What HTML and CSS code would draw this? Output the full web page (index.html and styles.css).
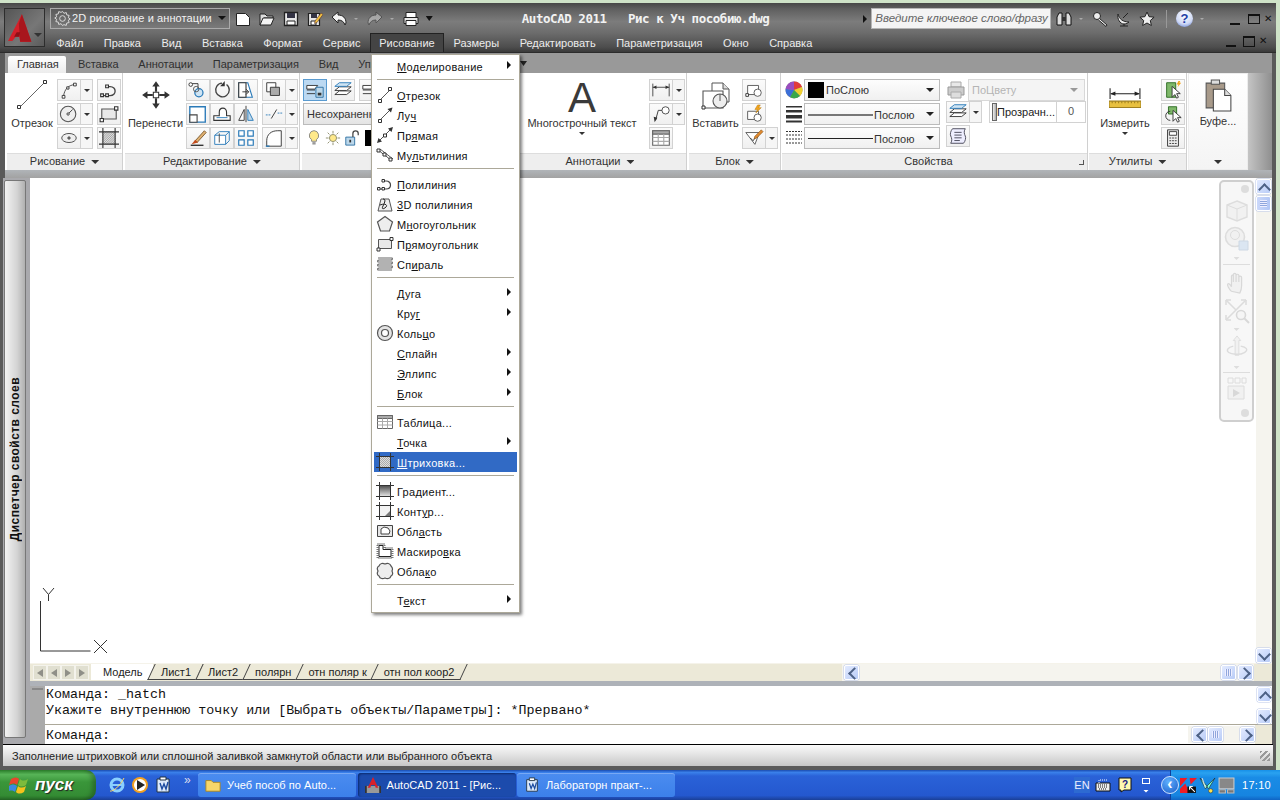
FILE: index.html
```html
<!DOCTYPE html>
<html lang="ru">
<head>
<meta charset="utf-8">
<title>AutoCAD 2011</title>
<link rel="stylesheet" href="styles.css">
</head>
<body>
<svg class="defs" width="0" height="0">
  <defs>
    <symbol id="i-bigline" viewBox="0 0 32 32"><path d="M3.500 28.500L29 3" fill="none" stroke="#666"/><path d="M1.500 26.500h3v3h-3zM27.500 1.500h3v3h-3z" fill="#fff" stroke="#333"/></symbol>
    <symbol id="i-line" viewBox="0 0 18 18"><path d="M4 14L14 4" fill="none" stroke="#555"/><path d="M2.500 13.500h3v3h-3zM12.500 1.500h3v3h-3z" fill="#fff" stroke="#333"/></symbol>
    <symbol id="i-ray" viewBox="0 0 18 18"><path d="M4 14L15 3" fill="none" stroke="#555"/><path d="M2.500 13.500h3v3h-3z" fill="#fff" stroke="#333"/><path d="M16.500 1.500l-5 1.500 3.500 3.500z" fill="#333"/></symbol>
    <symbol id="i-xline" viewBox="0 0 18 18"><path d="M2 16L16 2" fill="none" stroke="#555"/><path d="M7.500 8h3v3h-3z" fill="#fff" stroke="#333"/><path d="M17 1l-5 1.500 3.500 3.500zM1 17l5-1.500L2.500 12z" fill="#333"/></symbol>
    <symbol id="i-mline" viewBox="0 0 18 18"><path d="M2 4l13 10M4 3l13 10" fill="none" stroke="#555"/><path d="M1 3h3v3H1zM7 7h3v3H7zM13 12h3v3h-3z" fill="#fff" stroke="#333"/></symbol>
    <symbol id="i-pline" viewBox="0 0 18 18"><path d="M4 14h6c6 0 6-8 0-8H8" fill="none" stroke="#444" stroke-width="1.200"/><path d="M1.500 12.500h2.500v2.500H1.500zM6 12.500h2.500v2.500H6zM6 4.500h2.500v2.500H6z" fill="#fff" stroke="#333"/></symbol>
    <symbol id="i-3dp" viewBox="0 0 18 18"><path d="M5 4h8l3 12H2z" fill="#eee" stroke="#555"/><path d="M4 10c5-2 8 0 6 2s-5 3-3-1 3-7 0-7" fill="none" stroke="#222"/></symbol>
    <symbol id="i-pent" viewBox="0 0 18 18"><path d="M9 1.500l7.500 5.500-3 9h-9l-3-9z" fill="#eee" stroke="#555" stroke-width="1.200"/></symbol>
    <symbol id="i-rect" viewBox="0 0 18 18"><path d="M2.500 4.500h13v9h-13z" fill="#e8e8e8" stroke="#555"/><path d="M1 13h3v3H1zM14 2.500h3v3h-3z" fill="#fff" stroke="#333"/></symbol>
    <symbol id="i-spiral" viewBox="0 0 18 18"><path d="M2 3h14c1 1 0 2-1 2H3c-1 0-2 1-1 2h14c1 1 0 2-1 2H3c-1 0-2 1-1 2h14c1 1 0 2-1 2H3c-1 0-2 1-1 2h14" fill="none" stroke="#666" stroke-width="1.100"/></symbol>
    <symbol id="i-donut" viewBox="0 0 18 18"><circle cx="9" cy="9" r="7.500" fill="#e4e4e4" stroke="#555" stroke-width="1.200"/><circle cx="9" cy="9" r="3.500" fill="#fff" stroke="#555" stroke-width="1.200"/></symbol>
    <symbol id="i-table" viewBox="0 0 18 18"><path d="M1.500 2.500h15v13h-15z" fill="#fff" stroke="#666"/><path d="M1.500 2.500h15v3h-15z" fill="#aaa" stroke="#666"/><path d="M6.500 5.500v10M11.500 5.500v10M1.500 8.500h15M1.500 12h15" fill="none" stroke="#aaa"/></symbol>
    <symbol id="i-hatch" viewBox="0 0 18 18"><path d="M3 3h12v12H3z" fill="#ddd"/><path d="M3 5l2-2M3 7l4-4M3 9l6-6M3 11l8-8M3 13L13 3M3 15L15 3M5 15L15 5M7 15l8-8M9 15l6-6M11 15l4-4M13 15l2-2" stroke="#888" stroke-width=".6" fill="none"/><path d="M0 3.500h18M0 14.500h18M3.500 0v18M14.500 0v18" stroke="#333" fill="none"/></symbol>
    <symbol id="i-grad" viewBox="0 0 18 18"><defs><linearGradient id="g1" x1="0" y1="0" x2="0" y2="1"><stop offset="0" stop-color="#444"/><stop offset="1" stop-color="#eee"/></linearGradient></defs><path d="M3 3h12v12H3z" fill="url(#g1)"/><path d="M0 3.500h18M0 14.500h18M3.500 0v18M14.500 0v18" stroke="#333" fill="none"/></symbol>
    <symbol id="i-bound" viewBox="0 0 18 18"><path d="M4 4h10v10H4z" fill="#f2f2f2"/><path d="M9 14l5-5v5z" fill="#777"/><path d="M0 3.500h18M0 14.500h18M3.500 0v18M14.500 0v18" stroke="#333" fill="none"/></symbol>
    <symbol id="i-region" viewBox="0 0 18 18"><path d="M1.500 3.500h15v11h-15z" fill="#e6e6e6" stroke="#444"/><path d="M5 12V7l3-2 4 1 2 3-1 3z" fill="#fff" stroke="#444"/></symbol>
    <symbol id="i-wipe" viewBox="0 0 18 18"><path d="M1.500 2h7v4h8v10h-15z" fill="#fff" stroke="#777" stroke-width="2" stroke-dasharray="1 1"/><path d="M3 3.500h4v4h8v7H3z" fill="#fff" stroke="#222"/></symbol>
    <symbol id="i-cloud" viewBox="0 0 18 18"><path d="M3 4c1-3 4-3 6-2 2-1 5-1 6 2 2 2 2 3 1 5 1 2 1 4-1 5-1 3-4 3-6 2-2 1-5 1-6-2-2-1-2-3-1-5-1-2-1-4 1-5z" fill="#eee" stroke="#555" stroke-width="1.200"/></symbol>
    <symbol id="i-arc" viewBox="0 0 24 22"><path d="M6 18C7 10 11 6 18 5" fill="none" stroke="#444"/><path d="M4.500 17h3v3h-3zM9.500 7.500h2.500v2.500H9.500zM17 3.500h3v3h-3z" fill="#fff" stroke="#333"/></symbol>
    <symbol id="i-circle" viewBox="0 0 24 22"><circle cx="11" cy="11" r="8.500" fill="#eee" stroke="#555" stroke-width="1.200"/><path d="M11 11l5-5" stroke="#333"/><circle cx="11" cy="11" r="1.300" fill="#fff" stroke="#333"/></symbol>
    <symbol id="i-ellipse" viewBox="0 0 24 22"><ellipse cx="12" cy="11" rx="8" ry="5" fill="#eee" stroke="#444"/><path d="M10 11h4M12 9v4" stroke="#222"/></symbol>
    <symbol id="i-move" viewBox="0 0 30 30"><path d="M15 2l3.500 5h-2.500v5h-2V7h-2.500zM15 28l-3.500-5h2.500v-5h2v5h2.500zM2 15l5-3.500V14h5v2H7v2.500zM28 15l-5 3.500V16h-5v-2h5v-2.500z" fill="#333"/><path d="M12.500 12.500h5v5h-5z" fill="#fff" stroke="#333"/></symbol>
    <symbol id="i-copy" viewBox="0 0 24 22"><path d="M3 4h9v6" fill="none" stroke="#333"/><circle cx="4" cy="5" r="2" fill="#fff" stroke="#333"/><circle cx="13" cy="14" r="4.500" fill="#cfe4f3" stroke="#2a7ab8" stroke-width="1.400"/><circle cx="10" cy="10" r="3" fill="none" stroke="#555"/></symbol>
    <symbol id="i-rot" viewBox="0 0 24 22"><path d="M17 5a7.500 7.500 0 1 1-5-1.500" fill="none" stroke="#444" stroke-width="1.500"/><path d="M15 1v6h-5z" fill="#333"/></symbol>
    <symbol id="i-trim" viewBox="0 0 24 22"><path d="M4 3h10l5 16H4z" fill="#fff" stroke="#2a7ab8" stroke-width="1.200"/><path d="M4 3h8v16H4z" fill="#fff" stroke="#333" stroke-width="1.200"/><path d="M8 13h7M12 10l3 3-3 3" fill="none" stroke="#333"/></symbol>
    <symbol id="i-scale" viewBox="0 0 24 22"><path d="M3 3h17v17H3z" fill="#fff" stroke="#2a7ab8" stroke-width="1.500"/><path d="M3 12h8v8H3z" fill="#fff" stroke="#444" stroke-width="1.200"/></symbol>
    <symbol id="i-stretch" viewBox="0 0 24 22"><path d="M3 18h18v-5h-4V9c0-6-8-6-8 0v4H3z" fill="#fff" stroke="#333" stroke-width="1.200"/><path d="M6 15h12" stroke="#2a7ab8"/></symbol>
    <symbol id="i-mirror" viewBox="0 0 24 22"><path d="M12 2v18" stroke="#333" fill="none"/><path d="M10 6v12H4z" fill="#fff" stroke="#333"/><path d="M14 6v12h6z" fill="#bcd7ea" stroke="#2a7ab8"/></symbol>
    <symbol id="i-brush" viewBox="0 0 24 22"><path d="M9 14L19 3l2 2-10 11z" fill="#e0b070" stroke="#7a5a30"/><path d="M5 18l4-5 3 3z" fill="#c24a1a"/><path d="M4 19h14" stroke="#222" stroke-width="1.400"/></symbol>
    <symbol id="i-3d" viewBox="0 0 24 22"><path d="M4 8h12v10H4z" fill="#fff" stroke="#2a7ab8"/><path d="M4 8l5-4h11l-4 4M16 18l4-4V4" fill="none" stroke="#2a7ab8"/><path d="M9 6v10" stroke="#444"/></symbol>
    <symbol id="i-array" viewBox="0 0 24 22"><path d="M4 3h6v6H4zM14 3h6v6h-6zM4 13h6v6H4zM14 13h6v6h-6z" fill="#fff" stroke="#2a7ab8" stroke-width="1.300"/></symbol>
    <symbol id="i-order" viewBox="0 0 24 22"><path d="M4 3h10v10H4z" fill="#fff" stroke="#333"/><path d="M8 8h10v9H8z" fill="#aaa" stroke="#333"/></symbol>
    <symbol id="i-break" viewBox="0 0 24 22"><path d="M3 12h5M16 10h5" stroke="#2a7ab8" stroke-dasharray="2 1" fill="none"/><path d="M9 16l6-10" stroke="#333"/></symbol>
    <symbol id="i-fillet" viewBox="0 0 24 22"><path d="M4 20V14C4 7 9 3 16 3h4v17z" fill="#fff" stroke="#333"/><path d="M3 20h4" stroke="#2a7ab8" stroke-width="1.500"/></symbol>
    <symbol id="i-layers" viewBox="0 0 24 22"><path d="M3 16h13l5-4H8z" fill="#fff" stroke="#333"/><path d="M3 11.500h13l5-4H8z" fill="#fff" stroke="#333"/><path d="M3 7h13l5-4H8z" fill="#cfe4f3" stroke="#2a7ab8"/></symbol>
    <symbol id="i-layerp" viewBox="0 0 24 22"><path d="M3 6h12l-3 4H3zM3 11h9M3 15h9" fill="#fff" stroke="#333"/><path d="M13 8h8v11h-8z" fill="#bcd7ea" stroke="#2a6ea0"/><path d="M15 14h4v3h-4z" fill="#333"/></symbol>
    <symbol id="i-bulb" viewBox="0 0 16 22"><path d="M8 2a6 6 0 0 1 3 11v2H5v-2A6 6 0 0 1 8 2z" fill="#ffe98a" stroke="#777"/><path d="M6 16h4v3H6z" fill="#999"/></symbol>
    <symbol id="i-sun" viewBox="0 0 18 18"><circle cx="9" cy="9" r="4" fill="#ffe98a" stroke="#886"/><path d="M9 1v3M9 14v3M1 9h3M14 9h3M3 3l2 2M13 13l2 2M3 15l2-2M13 5l2-2" stroke="#886"/></symbol>
    <symbol id="i-lock" viewBox="0 0 18 18"><path d="M2 8h10v9H2z" fill="#bcd7ea" stroke="#2a6ea0"/><path d="M10 8V4c0-4 6-4 6 0v2" fill="none" stroke="#444" stroke-width="1.400"/><path d="M6 11h2v3H6z" fill="#333"/></symbol>
    <symbol id="i-dim" viewBox="0 0 24 22"><path d="M3 4v14M21 4v14" stroke="#444" fill="none"/><path d="M3 8h18" stroke="#444"/><path d="M3 8l4-2v4zM21 8l-4-2v4z" fill="#333"/></symbol>
    <symbol id="i-leader" viewBox="0 0 24 22"><circle cx="17" cy="7" r="4" fill="#fff" stroke="#444"/><path d="M13 7H9L6 18" fill="none" stroke="#333"/><path d="M5 20l-1-6 4 1z" fill="#333"/></symbol>
    <symbol id="i-block" viewBox="0 0 32 32"><path d="M12 2h11l6 6v13H12z" fill="#fff" stroke="#555"/><path d="M23 2v6h6" fill="#ddd" stroke="#555"/><path d="M3 10h20v17H3z" fill="#fff" stroke="#555" stroke-width="1.100"/><circle cx="20" cy="20" r="7" fill="#eee" stroke="#555" stroke-width="1.100"/><path d="M20 20v-7" stroke="#555"/><path d="M2 25h3v3H2z" fill="#fff" stroke="#333"/></symbol>
    <symbol id="i-bcreate" viewBox="0 0 24 22"><path d="M5 6h12v10H5z" fill="#fff" stroke="#555"/><circle cx="16" cy="14" r="4" fill="#fff" stroke="#555"/><path d="M3 15h3v3H3z" fill="#fff" stroke="#333"/></symbol>
    <symbol id="i-bedit" viewBox="0 0 24 22"><path d="M5 8h12v9H5z" fill="#fff" stroke="#555"/><circle cx="16" cy="15" r="4" fill="#fff" stroke="#555"/><path d="M16 1l-3 5h3l-2 4 6-6h-3l2-3z" fill="#f2a51c" stroke="#b47000" stroke-width=".5"/></symbol>
    <symbol id="i-attr" viewBox="0 0 24 22"><path d="M3 5h15l-5 13z" fill="#fff" stroke="#555"/><path d="M8 11l3 3 5-7" fill="none" stroke="#333"/><path d="M13 9l7-7 2 2-7 7-3 1z" fill="#e08a30" stroke="#7a4a10" stroke-width=".6"/></symbol>
    <symbol id="i-wheel" viewBox="0 0 18 18"><circle cx="9" cy="9" r="8.500" fill="#888"/><path d="M9 9V.500A8.500 8.500 0 0 1 17 6z" fill="#e23b3b"/><path d="M9 9l8-3a8.500 8.500 0 0 1-2 9z" fill="#f0d030"/><path d="M9 9l6 6a8.500 8.500 0 0 1-10 1z" fill="#3aa84a"/><path d="M9 9l-4 7A8.500 8.500 0 0 1 .6 8z" fill="#3b6fd8"/><path d="M9 9L.6 8A8.500 8.500 0 0 1 9 .5z" fill="#9a4cc0"/></symbol>
    <symbol id="i-lw" viewBox="0 0 18 18"><path d="M1 1h16v1.500H1zM1 5h16v2.500H1zM1 10h16v3.500H1z" fill="#333"/><path d="M1 15.500h16v2H1z" fill="#333"/></symbol>
    <symbol id="i-ltype" viewBox="0 0 18 18"><path d="M1 2.500h16M1 6h16M1 10h16M1 14h16" stroke="#333" stroke-dasharray="2 1" fill="none"/></symbol>
    <symbol id="i-printer" viewBox="0 0 20 20"><path d="M5 2h10v5H5z" fill="#e8e8e8" stroke="#aaa"/><path d="M2 7h16v8H2z" fill="#ccc" stroke="#999"/><path d="M5 12h10v6H5z" fill="#ddd" stroke="#aaa"/></symbol>
    <symbol id="i-list" viewBox="0 0 24 22"><path d="M6 3h14c-2 3-1 6 0 8s0 6-2 8H4c2-3 1-6 0-8s0-6 2-8z" fill="#eef" stroke="#445"/><path d="M8 7h8M8 10h8M8 13h8M8 16h6" stroke="#445"/></symbol>
    <symbol id="i-measure" viewBox="0 0 30 22"><path d="M1 1v10M29 1v10M2 6h26" stroke="#222" fill="none"/><path d="M1 6l5-2v4zM29 6l-5-2v4z" fill="#222"/><path d="M0 13h30v6H0z" fill="#e8c040" stroke="#a08020"/><path d="M3 13v2M6 13v2M9 13v2M12 13v2M15 13v2M18 13v2M21 13v2M24 13v2M27 13v2" stroke="#a08020"/></symbol>
    <symbol id="i-select" viewBox="0 0 24 22"><path d="M5 3h10v16H5z" fill="#7fb86a" stroke="#2a6a20"/><path d="M11 7v12l3-3 2 4 2-1-2-4h4z" fill="#fff" stroke="#333"/><path d="M18 1l-2 4h2l-1 3 4-5h-2l1-2z" fill="#f2a51c"/></symbol>
    <symbol id="i-quick" viewBox="0 0 24 22"><path d="M7 3h9v8H7z" fill="#7fb86a" stroke="#2a6a20"/><path d="M9 8a5 5 0 1 0 0 10" fill="none" stroke="#333"/><path d="M12 7v12l3-3 2 4 2-1-2-4h4z" fill="#fff" stroke="#333"/></symbol>
    <symbol id="i-calc" viewBox="0 0 24 22"><path d="M6 2h12v18H6z" fill="#eee" stroke="#333"/><path d="M8 4h8v4H8z" fill="#fff" stroke="#333"/><path d="M8 11h2M11 11h2M14 11h2M8 14h2M11 14h2M14 14h2M8 17h2M11 17h2M14 17h2" stroke="#333"/></symbol>
    <symbol id="i-clip" viewBox="0 0 26 32"><path d="M1 4h18v24H1z" fill="#a89a8a" stroke="#555"/><path d="M6 1h8v4H6z" fill="#ddd" stroke="#555"/><path d="M8 10h11l6 6v15H8z" fill="#fff" stroke="#444"/><path d="M19 10v6h6" fill="#ddd" stroke="#444"/></symbol>
    <symbol id="i-work" viewBox="0 0 18 18"><circle cx="9" cy="9" r="3" fill="none" stroke="#ddd"/><path d="M9 1.500l1.500 2 2.500-.8.500 2.500 2.500.5-.8 2.500 2 1.300-2 1.300.8 2.500-2.500.5-.5 2.500-2.500-.8L9 16.500l-1.500-2-2.500.8-.5-2.500-2.500-.5.8-2.500-2-1.300 2-1.300-.8-2.500 2.500-.5.5-2.500 2.500.8z" fill="none" stroke="#ddd"/></symbol>
    <symbol id="i-new" viewBox="0 0 16 16"><path d="M1.500 2.500h9l4 4v8h-13z" fill="#fff" stroke="#222"/></symbol>
    <symbol id="i-open" viewBox="0 0 16 16"><path d="M1 3h5l2 2h6v2H5l-3 7H1z" fill="#ddd" stroke="#222"/><path d="M4 7h11l-3 7H1z" fill="#f4f4f4" stroke="#222"/></symbol>
    <symbol id="i-save" viewBox="0 0 16 16"><path d="M1.500 1.500h13v13h-13z" fill="#e8e8e8" stroke="#222" stroke-width="1.300"/><path d="M4 2h8v5H4z" fill="#334"/><path d="M4 10h8v4H4z" fill="#fff" stroke="#222"/></symbol>
    <symbol id="i-saveas" viewBox="0 0 16 16"><path d="M1.500 2.500h11v12h-11z" fill="#e8e8e8" stroke="#222" stroke-width="1.200"/><path d="M4 3h6v4H4z" fill="#334"/><path d="M4 10h5v4H4z" fill="#fff" stroke="#222"/><path d="M8 10l6-8 2 1.500-6 8-2.500 1z" fill="#f2c040" stroke="#533" stroke-width=".6"/></symbol>
    <symbol id="i-undo" viewBox="0 0 16 16"><path d="M1 6l6-5v3c5 0 8 3 8 8l-1 2c-1-3-3-5-7-5v3z" fill="#f4f4f4" stroke="#222"/></symbol>
    <symbol id="i-print" viewBox="0 0 16 16"><path d="M3 1.500h10v5H3z" fill="#fff" stroke="#222"/><path d="M1 6.500h14v6H1z" fill="#e8e8e8" stroke="#222"/><path d="M3 9.500h10v5H3z" fill="#fff" stroke="#222"/></symbol>
    <symbol id="i-bino" viewBox="0 0 16 16"><path d="M1 14V6l2-4h3v12zM15 14V6l-2-4h-3v12z" fill="#ddd" stroke="#111"/><path d="M6 6h4v4H6z" fill="#333"/></symbol>
    <symbol id="i-key" viewBox="0 0 16 16"><circle cx="5" cy="5" r="3.500" fill="#eee" stroke="#222"/><path d="M7.500 7.500L15 14l-1 1.500-7.500-6.500" fill="#eee" stroke="#222"/></symbol>
    <symbol id="i-dish" viewBox="0 0 16 16"><path d="M2 3c1 5 5 8 11 8-1 1-3 2-5 2-4 0-7-5-6-10z" fill="#eee" stroke="#222"/><path d="M4 15h8M8 13v2M7 7l5-5" stroke="#222"/></symbol>
    <symbol id="i-star" viewBox="0 0 16 16"><path d="M8 1l2.100 4.700 5 .5-3.800 3.300 1.100 5L8 12l-4.400 2.500 1.100-5L.9 6.200l5-.5z" fill="#eee" stroke="#222"/></symbol>
    <symbol id="i-cube" viewBox="0 0 24 24"><path d="M12 2l10 4v12l-10 4-10-4V6z" fill="#f1f1f1" stroke="#ddd" stroke-width="1.400"/><path d="M2 6l10 4 10-4M12 10v12" stroke="#ddd" fill="none"/></symbol>
    <symbol id="i-wheelnav" viewBox="0 0 26 26"><circle cx="11" cy="11" r="9.500" fill="#f1f1f1" stroke="#ddd" stroke-width="1.600"/><circle cx="11" cy="9" r="4.500" fill="#f1f1f1" stroke="#ddd"/><path d="M15 15h9v9h-9z" fill="#dbe6f2" stroke="#cdd8e4"/></symbol>
    <symbol id="i-hand" viewBox="0 0 24 26"><path d="M6 22C3 19 1 15 2 14s3 1 4 3V6c0-2 2-2 2 0v6-8c0-2 3-2 3 0v8-7c0-2 3-2 3 0v7-5c0-2 3-2 3 0v9c0 4-1 6-2 8z" fill="#f1f1f1" stroke="#d8d8d8" stroke-width="1.300"/></symbol>
    <symbol id="i-zoom" viewBox="0 0 26 26"><path d="M2 2l10 10M22 2L2 22" stroke="#dcdcdc" stroke-width="1.600"/><path d="M2 2h5M2 2v5M22 2h-5M22 2v5M2 22h5M2 22v-5" stroke="#dcdcdc" stroke-width="1.600" fill="none"/><circle cx="17" cy="17" r="4.500" fill="#f5f5f5" stroke="#d8d8d8" stroke-width="1.600"/><path d="M20 20l5 5" stroke="#d8d8d8" stroke-width="2"/></symbol>
    <symbol id="i-orbit" viewBox="0 0 24 26"><path d="M12 1l4 5h-2v16h-4V6H8z" fill="#f1f1f1" stroke="#dcdcdc"/><path d="M8 12C2 13 0 17 3 19s12 3 17 0 2-6-4-7" fill="none" stroke="#dcdcdc" stroke-width="1.500"/></symbol>
    <symbol id="i-show" viewBox="0 0 20 24"><path d="M1 1h5v5H1zM8 1h5v5H8zM15 1h4v5h-4z" fill="none" stroke="#dcdcdc"/><path d="M1 9h16v13H1z" fill="#f1f1f1" stroke="#dcdcdc"/><path d="M6 12l7 4-7 4z" fill="#d8d8d8"/></symbol>
    <symbol id="i-xp" viewBox="0 0 22 22"><path d="M2 5c3-2 6-2 8 0l-2 6c-2-2-5-2-8 0z" fill="#e8452c"/><path d="M11 5c2 2 5 2 8 0l-2 6c-3 2-6 2-8 0z" fill="#7dbb3c"/><path d="M0 12c3-2 5-2 8 0l-2 6c-2-2-5-2-8 0z" fill="#3b8ae0"/><path d="M9 12c2 2 5 2 8 0l-2 6c-3 2-6 2-8 0z" fill="#f6c21c"/></symbol>
    <symbol id="i-ie" viewBox="0 0 18 18"><circle cx="9" cy="9" r="6" fill="none" stroke="#8ad0ff" stroke-width="3"/><path d="M4 9h10" stroke="#8ad0ff" stroke-width="2"/><path d="M2 15c3 1 10-5 14-13" stroke="#ffd866" fill="none"/></symbol>
    <symbol id="i-wmp" viewBox="0 0 18 18"><circle cx="9" cy="9" r="8" fill="#f2a020"/><circle cx="9" cy="9" r="6" fill="#fff"/><path d="M6 4l8 5-8 5z" fill="#222"/></symbol>
    <symbol id="i-wdoc" viewBox="0 0 18 18"><path d="M3 3h12v13H3z" fill="#dbe9fb" stroke="#234"/><path d="M6 7l2 6 2-5 2 5 2-7" fill="none" stroke="#1a4aa0" stroke-width="1.400"/><path d="M6 1h6v3H6z" fill="#fff" stroke="#234"/></symbol>
    <symbol id="i-folder" viewBox="0 0 18 18"><path d="M1 4h6l2 2h8v10H1z" fill="#f6d66a" stroke="#a88420"/></symbol>
    <symbol id="i-acad" viewBox="0 0 18 18"><path d="M0 10h18v8H0z" fill="#333"/><path d="M2 10h14v8H2z" fill="#999"/><path d="M9 0l6 12h-3l-1-3H7l-1 3H3z" fill="#d8202a"/></symbol>
    <symbol id="i-kbd" viewBox="0 0 16 16"><path d="M1 6h14v8H1z" fill="#eee" stroke="#111"/><path d="M3 8h10M3 10h10M4 12h8" stroke="#111" stroke-dasharray="1 1"/><path d="M4 6V3h8" stroke="#fff" stroke-dasharray="1 1" fill="none"/></symbol>
    <symbol id="i-helpb" viewBox="0 0 16 16"><path d="M2 1h12v12H7l-3 2v-2H2z" fill="#fff8b0" stroke="#111"/><text x="8" y="11" text-anchor="middle" font-family="Liberation Sans" font-weight="700" font-size="10" fill="#1a1a80">?</text></symbol>
    <symbol id="i-kas" viewBox="0 0 16 16"><path d="M0 1h7l-7 8zM9 1h7l-6 6zM0 15V11l5-5 4 9z" fill="#ee1c25"/><path d="M7 9h8v6H7z" fill="#111"/><path d="M9 9l5 5M9 9h3M9 9v3" stroke="#fff"/></symbol>
    <symbol id="i-net" viewBox="0 0 16 16"><path d="M1 1h14v10H1z" fill="#888" stroke="#ccc"/><path d="M1 12h6v3H1zM9 12h6v3H9z" fill="#777" stroke="#bbb"/></symbol>
    <symbol id="i-tool" viewBox="0 0 16 16"><path d="M1 1l5 10 2-2zM15 1L7 9l2 2z" fill="#7fd" stroke="#222" stroke-width=".6"/><path d="M3 1l3 9" stroke="#ddd"/><circle cx="11" cy="13" r="2" fill="#ffe14a" stroke="#333" stroke-width=".5"/></symbol>
  </defs>
</svg>

<div class="screen">
  <div class="window">
    <header class="titlebar">
      <div class="appbtn">
        <svg class="app-a" viewBox="0 0 30 34"><path d="M16 1l11 32H14l-1-6H9l-4 5H0z" fill="#d3202a"/><path d="M16 1l11 32H14L12.500 12z" fill="#a8161d"/><path d="M10 22h4l-1 5H7z" fill="#8e1117"/></svg>
        <span class="tri app-tri"></span>
      </div>
      <div class="titlecol">
        <div class="qatrow">
          <div class="combo workspace"><svg class="ws-ic"><use href="#i-work"/></svg><span class="ws-txt">2D рисование и аннотации</span><span class="tri dark"></span></div>
          <svg class="qi q-new"><use href="#i-new"/></svg>
          <svg class="qi"><use href="#i-open"/></svg>
          <svg class="qi"><use href="#i-save"/></svg>
          <svg class="qi"><use href="#i-saveas"/></svg>
          <svg class="qi"><use href="#i-undo"/></svg>
          <span class="qdd"></span>
          <svg class="qi flip dim"><use href="#i-undo"/></svg>
          <span class="qdd"></span>
          <svg class="qi"><use href="#i-print"/></svg>
          <span class="qmore"></span>
          <h1 class="apptitle">AutoCAD 2011&nbsp;&nbsp;&nbsp;Рис к Уч пособию.dwg</h1>
          <span class="searchtri"></span>
          <div class="search">Введите ключевое слово/фразу</div>
          <svg class="qi r-bino"><use href="#i-bino"/></svg>
          <span class="qdd"></span>
          <svg class="qi"><use href="#i-key"/></svg>
          <svg class="qi"><use href="#i-dish"/></svg>
          <svg class="qi r-star"><use href="#i-star"/></svg>
          <span class="qsep"></span>
          <span class="helpbtn">?</span>
          <span class="qdd"></span>
          <div class="wctl"><span class="w-min"></span><span class="w-max"></span><span class="w-x">✕</span></div>
        </div>
        <div class="menurow">
          <nav class="menubar">
            <span class="mi">Файл</span><span class="mi">Правка</span><span class="mi">Вид</span><span class="mi">Вставка</span><span class="mi">Формат</span><span class="mi">Сервис</span><span class="mi on">Рисование</span><span class="mi">Размеры</span><span class="mi">Редактировать</span><span class="mi">Параметризация</span><span class="mi">Окно</span><span class="mi">Справка</span>
          </nav>
          <div class="wctl wctl2"><span class="w-min"></span><span class="w-rest"></span><span class="w-x">✕</span></div>
        </div>
      </div>
    </header>

    <div class="tabsrow">
      <span class="rtab active">Главная</span><span class="rtab">Вставка</span><span class="rtab">Аннотации</span><span class="rtab">Параметризация</span><span class="rtab">Вид</span><span class="rtab">Упр</span>
      <span class="tabtri"></span>
    </div>

    <section class="ribbon">
      <div class="panel p1">
        <div class="pbody">
          <div class="big b1"><svg class="bi"><use href="#i-bigline"/></svg><span class="blab">Отрезок</span></div>
          <div class="col">
            <div class="split"><span class="btn"><svg class="si"><use href="#i-arc"/></svg></span><span class="dd"></span></div>
            <div class="split"><span class="btn"><svg class="si"><use href="#i-circle"/></svg></span><span class="dd"></span></div>
            <div class="split"><span class="btn"><svg class="si"><use href="#i-ellipse"/></svg></span><span class="dd"></span></div>
          </div>
          <div class="col cg">
            <span class="btn"><svg class="si"><use href="#i-pline"/></svg></span>
            <span class="btn"><svg class="si"><use href="#i-rect"/></svg></span>
            <span class="btn"><svg class="si"><use href="#i-hatch"/></svg></span>
          </div>
        </div>
        <div class="ptitle">Рисование<span class="ptri"></span></div>
      </div>
      <div class="panel p2">
        <div class="pbody">
          <div class="big b2"><svg class="bi"><use href="#i-move"/></svg><span class="blab">Перенести</span></div>
          <div class="col">
            <div class="row3"><span class="btn"><svg class="si"><use href="#i-copy"/></svg></span><span class="btn"><svg class="si"><use href="#i-rot"/></svg></span><span class="btn"><svg class="si"><use href="#i-trim"/></svg></span></div>
            <div class="row3"><span class="btn"><svg class="si"><use href="#i-scale"/></svg></span><span class="btn"><svg class="si"><use href="#i-stretch"/></svg></span><span class="btn"><svg class="si"><use href="#i-mirror"/></svg></span></div>
            <div class="row3"><span class="btn"><svg class="si"><use href="#i-brush"/></svg></span><span class="btn"><svg class="si"><use href="#i-3d"/></svg></span><span class="btn"><svg class="si"><use href="#i-array"/></svg></span></div>
          </div>
          <div class="col cg">
            <div class="split"><span class="btn"><svg class="si"><use href="#i-order"/></svg></span><span class="dd"></span></div>
            <div class="split"><span class="btn"><svg class="si"><use href="#i-break"/></svg></span><span class="dd"></span></div>
            <div class="split"><span class="btn"><svg class="si"><use href="#i-fillet"/></svg></span><span class="dd"></span></div>
          </div>
        </div>
        <div class="ptitle">Редактирование<span class="ptri"></span></div>
      </div>
      <div class="panel p3">
        <div class="pbody p3body">
          <div class="p3row"><span class="btn sel"><svg class="si"><use href="#i-layerp"/></svg></span><span class="btn"><svg class="si"><use href="#i-layers"/></svg></span><span class="btn"><svg class="si"><use href="#i-layerp"/></svg></span></div>
          <div class="combo layercombo">Несохраненн</div>
          <div class="p3row lyr"><svg class="li"><use href="#i-bulb"/></svg><svg class="li"><use href="#i-sun"/></svg><svg class="li"><use href="#i-lock"/></svg><span class="blk"></span></div>
        </div>
        <div class="ptitle ptitle-blank"></div>
      </div>
      <div class="panel p4">
        <div class="pbody">
          <div class="big b4"><span class="bigA">A</span><span class="blab">Многострочный текст</span><span class="tri small"></span></div>
          <div class="col">
            <div class="split"><span class="btn"><svg class="si"><use href="#i-dim"/></svg></span><span class="dd"></span></div>
            <div class="split"><span class="btn"><svg class="si"><use href="#i-leader"/></svg></span><span class="dd"></span></div>
            <span class="btn"><svg class="si"><use href="#i-table"/></svg></span>
          </div>
        </div>
        <div class="ptitle">Аннотации<span class="ptri"></span></div>
      </div>
      <div class="panel p5">
        <div class="pbody">
          <div class="big b5"><svg class="bi bl"><use href="#i-block"/></svg><span class="blab">Вставить</span></div>
          <div class="col">
            <span class="btn"><svg class="si"><use href="#i-bcreate"/></svg></span>
            <span class="btn"><svg class="si"><use href="#i-bedit"/></svg></span>
            <div class="split"><span class="btn"><svg class="si"><use href="#i-attr"/></svg></span><span class="dd"></span></div>
          </div>
        </div>
        <div class="ptitle">Блок<span class="ptri"></span></div>
      </div>
      <div class="panel p6">
        <div class="pbody p6body">
          <div class="col">
            <div class="prow"><svg class="pi"><use href="#i-wheel"/></svg><div class="combo pc"><span class="swatch"></span><span class="pct">ПоСлою</span><span class="tri dark"></span></div></div>
            <div class="prow"><svg class="pi"><use href="#i-lw"/></svg><div class="combo pc"><span class="lsample thick"></span><span class="pct2">Послою</span><span class="tri dark"></span></div></div>
            <div class="prow"><svg class="pi"><use href="#i-ltype"/></svg><div class="combo pc"><span class="lsample"></span><span class="pct2">Послою</span><span class="tri dark"></span></div></div>
          </div>
          <div class="col pr">
            <div class="prow"><svg class="pi2"><use href="#i-printer"/></svg><div class="combo pd">ПоЦвету<span class="tri grey"></span></div></div>
            <div class="prow">
              <div class="split"><span class="btn"><svg class="si"><use href="#i-layers"/></svg></span><span class="dd"></span></div>
              <div class="transp"><span class="tslider"></span><span class="tlab">Прозрачн...</span><span class="tval">0</span></div>
            </div>
            <span class="btn"><svg class="si"><use href="#i-list"/></svg></span>
          </div>
        </div>
        <div class="ptitle ptr">Свойства<span class="corner"></span></div>
      </div>
      <div class="panel p7">
        <div class="pbody">
          <div class="big b7"><svg class="bi meas"><use href="#i-measure"/></svg><span class="blab">Измерить</span><span class="tri small"></span></div>
          <div class="col">
            <span class="btn"><svg class="si"><use href="#i-select"/></svg></span>
            <span class="btn"><svg class="si"><use href="#i-quick"/></svg></span>
            <span class="btn"><svg class="si"><use href="#i-calc"/></svg></span>
          </div>
        </div>
        <div class="ptitle">Утилиты<span class="ptri"></span></div>
      </div>
      <div class="clip">
        <svg class="clipi"><use href="#i-clip"/></svg>
        <span class="cliplab">Буфе...</span>
        <span class="ptri cliptri"></span>
      </div>
      <div class="ribfill"></div>
    </section>
    <div class="ribgap"></div>

    <div class="work">
      <aside class="palette"><div class="strip"><span class="striptxt">Диспетчер свойств слоев</span></div></aside>
      <div class="workmain">
        <div class="viewport">
          <div class="canvas">
            <svg class="ucs" viewBox="0 0 72 70"><path d="M1.500 14v50h50" fill="none" stroke="#333"/><path d="M4 1l5.500 6.500L15 1M9.500 7.500V14" fill="none" stroke="#333"/><path d="M55 53l13 13M68 53L55 66" fill="none" stroke="#333"/></svg>
            <div class="navbar">
              <span class="navx"></span>
              <svg class="nv n1"><use href="#i-cube"/></svg>
              <svg class="nv n2"><use href="#i-wheelnav"/></svg>
              <span class="navtri"></span><span class="navsep"></span>
              <svg class="nv n3"><use href="#i-hand"/></svg>
              <svg class="nv n4"><use href="#i-zoom"/></svg>
              <span class="navtri t4"></span>
              <svg class="nv n5"><use href="#i-orbit"/></svg>
              <span class="navtri t5"></span><span class="navsep s2"></span>
              <svg class="nv n6"><use href="#i-show"/></svg>
              <span class="navmin"></span>
            </div>
          </div>
          <div class="vscroll">
            <span class="sb up"></span><span class="sb thumbv"></span><span class="sfill"></span><span class="sb down"></span>
          </div>
        </div>
        <div class="layoutbar">
          <div class="lnav"><span class="ln first"></span><span class="ln prev"></span><span class="ln next"></span><span class="ln last"></span></div>
          <div class="ltabs">
            <span class="ltab cur">Модель</span><span class="ltab">Лист1</span><span class="ltab">Лист2</span><span class="ltab">полярн</span><span class="ltab">отн поляр к</span><span class="ltab">отн пол коор2</span>
          </div>
          <div class="hscroll">
            <span class="sb left"></span><span class="sfill"></span><span class="sb thumbh"></span><span class="sb right"></span>
          </div>
          <span class="corner2"></span>
        </div>
        <div class="sepbar"></div>
        <div class="command">
          <div class="grip"></div>
          <div class="cmdmain">
            <div class="cmdtop">
              <div class="history">Команда: _hatch<br>Укажите внутреннюю точку или [Выбрать объекты/Параметры]: *Прервано*</div>
              <div class="cmdv"><span class="sb up"></span><span class="sb down"></span></div>
            </div>
            <div class="cmdline">
              <span class="prompt">Команда:</span>
              <div class="cmdh"><span class="sb left"></span><span class="sb thumbh"></span><span class="sfill"></span><span class="sb right"></span></div>
              <span class="corner3"></span>
            </div>
          </div>
        </div>
      </div>
    </div>
    <footer class="status"><span>Заполнение штриховкой или сплошной заливкой замкнутой области или выбранного объекта</span><span class="resize"></span></footer>
  </div>

  <div class="taskbar">
    <div class="start"><svg class="xp"><use href="#i-xp"/></svg><span>пуск</span></div>
    <div class="ql"><svg class="qli"><use href="#i-ie"/></svg><svg class="qli"><use href="#i-wmp"/></svg><svg class="qli"><use href="#i-wdoc"/></svg><span class="chev">»</span></div>
    <div class="tbtn"><svg class="tbi"><use href="#i-folder"/></svg>Учеб пособ по Auto...</div>
    <div class="tbtn act"><svg class="tbi"><use href="#i-acad"/></svg>AutoCAD 2011 - [Рис...</div>
    <div class="tbtn"><svg class="tbi"><use href="#i-wdoc"/></svg>Лабораторн практ-...</div>
    <div class="tspace"></div>
    <span class="lang">EN</span>
    <svg class="tri16"><use href="#i-kbd"/></svg>
    <svg class="tri16"><use href="#i-helpb"/></svg>
    <div class="restore"><span class="r-ic"></span><span class="r-tri"></span></div>
    <div class="tray">
      <span class="trayarrow">‹</span>
      <svg class="tri16"><use href="#i-kas"/></svg>
      <svg class="tri16"><use href="#i-tool"/></svg>
      <svg class="tri16"><use href="#i-net"/></svg>
      <span class="clock">17:10</span>
    </div>
  </div>

  <div class="menu">
    <div class="it"><span class="lb"><u>М</u>оделирование</span><span class="ar"></span></div>
    <div class="sp"></div>
    <div class="it"><svg class="mic"><use href="#i-line"/></svg><span class="lb"><u>О</u>трезок</span></div>
    <div class="it"><svg class="mic"><use href="#i-ray"/></svg><span class="lb">Лу<u>ч</u></span></div>
    <div class="it"><svg class="mic"><use href="#i-xline"/></svg><span class="lb">Пр<u>я</u>мая</span></div>
    <div class="it"><svg class="mic"><use href="#i-mline"/></svg><span class="lb">Му<u>л</u>ьтилиния</span></div>
    <div class="sp"></div>
    <div class="it"><svg class="mic"><use href="#i-pline"/></svg><span class="lb"><u>П</u>олилиния</span></div>
    <div class="it"><svg class="mic"><use href="#i-3dp"/></svg><span class="lb"><u>3</u>D полилиния</span></div>
    <div class="it"><svg class="mic"><use href="#i-pent"/></svg><span class="lb">М<u>н</u>огоугольник</span></div>
    <div class="it"><svg class="mic"><use href="#i-rect"/></svg><span class="lb">П<u>р</u>ямоугольник</span></div>
    <div class="it"><svg class="mic"><use href="#i-spiral"/></svg><span class="lb">Сп<u>и</u>раль</span></div>
    <div class="sp"></div>
    <div class="it"><span class="lb"><u>Д</u>уга</span><span class="ar"></span></div>
    <div class="it"><span class="lb">Кру<u>г</u></span><span class="ar"></span></div>
    <div class="it"><svg class="mic"><use href="#i-donut"/></svg><span class="lb">Коль<u>ц</u>о</span></div>
    <div class="it"><span class="lb"><u>С</u>плайн</span><span class="ar"></span></div>
    <div class="it"><span class="lb"><u>Э</u>ллипс</span><span class="ar"></span></div>
    <div class="it"><span class="lb"><u>Б</u>лок</span><span class="ar"></span></div>
    <div class="sp"></div>
    <div class="it"><svg class="mic"><use href="#i-table"/></svg><span class="lb">Таблица...</span></div>
    <div class="it"><span class="lb"><u>Т</u>очка</span><span class="ar"></span></div>
    <div class="it hl"><svg class="mic"><use href="#i-hatch"/></svg><span class="lb"><u>Ш</u>триховка...</span></div>
    <div class="sp"></div>
    <div class="it"><svg class="mic"><use href="#i-grad"/></svg><span class="lb">Градиент...</span></div>
    <div class="it"><svg class="mic"><use href="#i-bound"/></svg><span class="lb">Конт<u>у</u>р...</span></div>
    <div class="it"><svg class="mic"><use href="#i-region"/></svg><span class="lb">Обл<u>а</u>сть</span></div>
    <div class="it"><svg class="mic"><use href="#i-wipe"/></svg><span class="lb">Маскиро<u>в</u>ка</span></div>
    <div class="it"><svg class="mic"><use href="#i-cloud"/></svg><span class="lb">Обла<u>к</u>о</span></div>
    <div class="sp"></div>
    <div class="it"><span class="lb">Т<u>е</u>кст</span><span class="ar"></span></div>
  </div>
</div>
</body>
</html>
```

FILE: styles.css
```css
* { box-sizing: border-box; }
html, body { margin: 0; padding: 0; }
body { width: 1280px; height: 800px; overflow: hidden; font-family: "Liberation Sans", Arial, sans-serif; font-size: 11px; color: #222; background: #cfe3c8; }
.defs { position: absolute; }
svg { display: block; }
.screen { position: relative; width: 1280px; height: 800px; display: flex; flex-direction: column; padding-top: 3px; }

.window { width: 1276px; height: 767px; background: #5a5a5a; padding: 0 4px 4px 3px; display: flex; flex-direction: column; }

.titlebar { height: 50px; margin: 0 -4px 0 -3px; display: flex; background: linear-gradient(#474747 0, #5f5f5f 12%, #7c7c7c 38%, #6d6d6d 60%, #4d4d4d 90%, #3a3a3a 100%); border-bottom: 1px solid #2c2c2c; }
.appbtn { position: relative; width: 41px; height: 39px; margin: 5px 0 0 4px; background: linear-gradient(135deg, #555, #777 60%, #5a5a5a); border: 1px solid #2d2d2d; flex: none; display: flex; align-items: center; }
.app-a { width: 26px; height: 30px; margin-left: 3px; }
.app-tri { position: absolute; right: 2px; top: 24px; border-top-color: #111; }
.tri { display: inline-block; width: 0; height: 0; border-left: 4px solid transparent; border-right: 4px solid transparent; border-top: 4px solid #333; }
.titlecol { flex: 1; display: flex; flex-direction: column; min-width: 0; }
.qatrow { height: 31px; display: flex; align-items: center; padding-left: 5px; }
.combo { display: flex; align-items: center; background: linear-gradient(#f8f8f8, #e4e4e4); border: 1px solid #bbb; height: 22px; }
.workspace { width: 180px; height: 21px; margin-top: -1px; padding: 0 3px; background: linear-gradient(#5a5a5a, #7a7a7a); border-color: #aaa; color: #f0f0f0; font-size: 11px; letter-spacing: .1px; }
.ws-ic { width: 17px; height: 17px; flex: none; }
.ws-txt { flex: 1; margin-left: 1px; white-space: nowrap; color: #f2f2f2; }
.tri.dark { border-top-color: #222; }
.workspace .tri { border-top-color: #111; }
.qi { width: 16px; height: 16px; margin-left: 8px; flex: none; }
.q-new { margin-left: 5px; }
.flip { transform: scaleX(-1); }
.dim { opacity: .4; }
.qdd { width: 0; height: 0; margin: 0 0 0 7px; border-left: 2px solid transparent; border-right: 2px solid transparent; border-top: 2px solid #aaa; flex: none; }
.qdd + .qi { margin-left: 9px; }
.qmore { width: 7px; height: 5px; margin-left: 7px; background: #111; clip-path: polygon(0 0, 100% 0, 50% 100%); flex: none; }
.apptitle { margin: 0 0 0 89px; width: 342px; font: 700 12.500px "DejaVu Sans Mono", "Liberation Mono", monospace; letter-spacing: -.45px; color: #f2f2f2; white-space: nowrap; }
.searchtri { width: 0; height: 0; border-top: 4px solid transparent; border-bottom: 4px solid transparent; border-left: 4px solid #111; flex: none; }
.search { width: 180px; height: 21px; margin-left: 4px; background: #f4f4f4; border: 1px solid #b4b4b4; color: #666; font-style: italic; font-size: 11.500px; padding: 3px 3px; white-space: nowrap; overflow: hidden; }
.r-bino { margin-left: 5px; }
.r-star { margin-left: 7px; }
.qsep { width: 1px; height: 18px; background: #999; margin-left: 11px; flex: none; }
.helpbtn { width: 17px; height: 17px; margin-left: 9px; border-radius: 50%; background: radial-gradient(circle at 50% 30%, #fff, #cfd9f5 60%, #4c6fd0); color: #1e3ea8; font: 700 13px/17px "Liberation Sans", sans-serif; text-align: center; flex: none; }
.wctl { display: flex; align-items: center; margin-left: 26px; width: 46px; height: 14px; flex: none; }
.w-min { width: 10px; height: 2px; margin-top: 10px; background: #111; flex: none; }
.w-max { width: 12px; height: 10px; margin-left: 8px; border: 1px solid #111; border-top-width: 2px; flex: none; }
.w-rest { width: 12px; height: 11px; margin-left: 7px; flex: none; border: 1px solid #111; border-top-width: 2px; }
.w-x { font: 700 10px/14px "DejaVu Sans", sans-serif; color: #111; margin-left: 4px; flex: none; }
.menurow { flex: 1; display: flex; align-items: flex-end; justify-content: space-between; padding-right: 4px; }
.menubar { display: flex; height: 18px; margin-left: 1px; }
.mi { padding: 0 10.250px; line-height: 17px; color: #ececec; white-space: nowrap; font-size: 11px; border: 1px solid transparent; border-bottom: 0; margin: 0 -1px; }
.mi.on { background: #444; border-color: #222; margin: -1px -1px 0; padding: 0 8.500px; line-height: 18px; }
.wctl2 { margin-bottom: 4px; margin-left: 0; }

.tabsrow { height: 20px; margin-left: 2px; background: #999; display: flex; align-items: flex-end; padding-left: 3px; position: relative; }
.rtab { height: 17px; padding: 0 9.900px; color: #303030; line-height: 17px; white-space: nowrap; letter-spacing: -.03px; }
.rtab.active { background: linear-gradient(#fff, #ececec); margin-right: 2px; padding: 0 9px; width: 58px; border-radius: 2px 2px 0 0; }
.tabtri { position: absolute; left: 515px; top: 8px; width: 7px; height: 5px; background: #222; clip-path: polygon(0 0, 100% 0, 50% 100%); }

.ribbon { height: 97px; margin-left: 2px; background: #fff; display: flex; padding-left: 2px; }
.panel { display: flex; flex-direction: column; margin-right: 2px; border-right: 1px solid #d0d0d0; flex: none; }
.p1 { width: 116px; } .p2 { width: 175px; } .p3 { width: 212px; margin-right: 0; } .p4 { width: 173px; } .p5 { width: 92px; margin-right: 1px; } .p6 { width: 306px; margin-right: 1px; } .p7 { width: 98px; margin-right: 1px; }
.pbody { height: 80px; display: flex; padding-top: 6px; }
.ptitle { height: 17px; background: #eee; border-top: 1px solid #ddd; text-align: center; line-height: 14px; color: #333; position: relative; }
.ptri { display: inline-block; width: 8px; height: 4px; margin-left: 6px; background: #333; clip-path: polygon(0 0, 100% 0, 50% 100%); vertical-align: 1px; }
.ptr { padding-right: 12px; }
.corner { position: absolute; right: 3px; top: 6px; width: 5px; height: 5px; border-right: 1px solid #555; border-bottom: 1px solid #555; }
.big { display: flex; flex-direction: column; align-items: center; flex: none; }
.bi { width: 32px; height: 32px; flex: none; }
.bi.bl { margin-top: 2px; margin-bottom: -2px; }
.blab { margin-top: 5px; line-height: 14px; white-space: nowrap; color: #333; }
.b1 { width: 50px; } .b2 { width: 61px; } .b4 { width: 122px; margin-left: 7px; margin-right: 6px; } .b5 { width: 53px; } .b7 { width: 72px; }
.bi.meas { height: 24px; margin-top: 8px; }
.bigA { font: 400 42px/37px "Liberation Sans", sans-serif; color: #3a3a3a; height: 37px; }
.b4 .blab { margin-top: 0; }
.tri.small { margin-top: 2px; border-width: 3px 3px 0; border-top-color: #333; }
.col { display: flex; flex-direction: column; gap: 2px; flex: none; }
.cg { margin-left: 4px; }
.btn { width: 24px; height: 22px; border: 1px solid #d2d2d2; background: linear-gradient(#fbfbfb, #f0f0f0); display: flex; align-items: center; justify-content: center; flex: none; }
.btn.sel { background: #bcd9f2; border-color: #5a9bd0; }
.si { width: 22px; height: 20px; }
.split { display: flex; width: 36px; height: 22px; }
.dd { width: 12px; height: 22px; border: 1px solid #d2d2d2; border-left: 0; background: #f6f6f6; position: relative; flex: none; }
.dd::after { content: ""; position: absolute; left: 3px; top: 9px; border-left: 3px solid transparent; border-right: 3px solid transparent; border-top: 3px solid #333; }
.row3 { display: flex; }
.p3body { flex-direction: column; gap: 2px; padding-left: 1px; }
.p3row { display: flex; gap: 4px; height: 22px; }
.layercombo { width: 210px; color: #333; padding-left: 3px; white-space: nowrap; overflow: hidden; }
.lyr { align-items: center; padding-left: 3px; gap: 3px; }
.li { width: 16px; height: 18px; }
.blk { width: 7px; height: 16px; background: #000; margin-left: 2px; }
.p6body { padding-left: 3px; }
.prow { display: flex; align-items: center; height: 22px; }
.pi { width: 18px; height: 18px; flex: none; margin-right: 1px; }
.pc { width: 136px; padding: 0 3px; position: relative; background: linear-gradient(#fdfdfd, #f0f0f0); }
.pc .tri { margin-left: auto; margin-right: 2px; }
.swatch { width: 16px; height: 16px; background: #000; flex: none; }
.pct { margin-left: 2px; color: #333; }
.lsample { width: 65px; height: 1px; background: #222; flex: none; margin-top: 1px; }
.lsample.thick { height: 2px; background: #777; }
.pct2 { margin: 1px 0 0 1px; color: #333; font-size: 11px; }
.pr { margin-left: 6px; gap: 0; }
.pi2 { width: 20px; height: 20px; flex: none; }
.pd { width: 117px; margin-left: 2px; color: #b4b4b4; padding-left: 3px; background: #f4f4f4; border-color: #d8d8d8; }
.pd .tri { margin-left: auto; margin-right: 6px; border-top-color: #999; }
.tri.grey { border-top-color: #999; }
.pr > .btn { margin-top: 2px; }
.transp { display: flex; margin-left: 7px; width: 97px; height: 22px; border: 1px solid #d2d2d2; background: #fff; align-items: center; }
.tslider { width: 5px; height: 18px; background: linear-gradient(90deg, #eee, #aaa); border: 1px solid #666; margin-left: 2px; flex: none; }
.tlab { flex: 1; font-size: 11px; white-space: nowrap; color: #222; }
.tval { width: 29px; border-left: 1px solid #d2d2d2; height: 20px; line-height: 18px; text-align: center; color: #555; flex: none; }
.clip { width: 60px; flex: none; border: 1px solid #ededed; background: linear-gradient(#fff, #f4f4f4); display: flex; flex-direction: column; align-items: center; height: 97px; }
.clipi { width: 27px; height: 33px; margin-top: 5px; }
.cliplab { margin-top: 2px; line-height: 14px; color: #333; }
.cliptri { margin: auto 0 5px; }
.ribfill { flex: 1; background: linear-gradient(90deg, #c4c4c4, #8f8f8f); }

.ribgap { height: 8px; margin-left: 2px; background: linear-gradient(#b0b4b8, #a2a2a2); }

.work { height: 566px; display: flex; background: #aab; }
.palette { width: 27px; background: #a9a9ad; flex: none; padding: 2px 4px 6px 1px; }
.strip { width: 22px; height: 100%; border: 1px solid #777; border-radius: 2px; background: linear-gradient(90deg, #f2f2f2, #d4d4d4 60%, #b0b0b0); display: flex; align-items: center; justify-content: center; }
.striptxt { writing-mode: vertical-rl; transform: rotate(180deg); font-weight: 700; font-size: 12px; color: #111; white-space: nowrap; letter-spacing: .45px; }
.workmain { width: 1242px; display: flex; flex-direction: column; flex: none; }
.viewport { height: 485px; display: flex; }
.canvas { position: relative; flex: 1; background: #fff; }
.ucs { position: absolute; left: 9px; top: 409px; width: 72px; height: 70px; }
.navbar { position: absolute; left: 1189px; top: 2px; width: 35px; height: 242px; border: 2px solid #cfcfcf; border-radius: 5px; background: #f7f7f7; display: flex; flex-direction: column; align-items: center; }
.navx { position: absolute; right: 3px; top: 3px; width: 8px; height: 8px; border-radius: 50%; background: #ddd; }
.nv { flex: none; }
.n1 { width: 24px; height: 24px; margin-top: 17px; }
.n2 { width: 26px; height: 26px; margin-top: 3px; }
.navtri { width: 6px; height: 3px; margin-top: 5px; background: #ddd; clip-path: polygon(0 0, 100% 0, 50% 100%); flex: none; }
.navtri.t4 { margin-top: 4px; }
.navtri.t5 { margin-top: 7px; }
.navsep { width: 27px; height: 1px; background: #ddd; margin-top: 4px; flex: none; }
.navsep.s2 { margin-top: 3px; }
.n3 { width: 24px; height: 24px; margin-top: 6px; }
.n4 { width: 26px; height: 26px; margin-top: 3px; }
.n5 { width: 24px; height: 24px; margin-top: 4px; }
.n6 { width: 20px; height: 24px; margin-top: 4px; }
.navmin { position: absolute; right: 3px; bottom: 3px; width: 8px; height: 8px; border-radius: 50%; background: #ddd; }
.vscroll { width: 16px; background: #f5f4ee; display: flex; flex-direction: column; padding-top: 1px; flex: none; }
.sb { display: block; width: 15px; height: 15px; flex: none; border: 1px solid #fff; border-radius: 2px; background: linear-gradient(135deg, #e3ebff, #b9ccf7); position: relative; box-shadow: 0 0 0 .5px #b9c6e8; }
.sb.up::after, .sb.down::after, .sb.left::after, .sb.right::after { content: ""; position: absolute; left: 3px; top: 3px; width: 7px; height: 7px; border-left: 2px solid #4d6185; border-top: 2px solid #4d6185; }
.sb.up::after { transform: translateY(2px) rotate(45deg); }
.sb.down::after { transform: translateY(-2px) rotate(225deg); }
.sb.left::after { transform: translateX(2px) rotate(-45deg); }
.sb.right::after { transform: translateX(-2px) rotate(135deg); }
.thumbv { margin-top: 2px; background: linear-gradient(90deg, #cbd8fa, #b2c6f5); }
.thumbv::after { content: ""; position: absolute; left: 3px; top: 3px; width: 7px; height: 7px; background: repeating-linear-gradient(#eef, #eef 1px, #8fa6dc 1px, #8fa6dc 2px); }
.thumbh::after { content: ""; position: absolute; left: 3px; top: 3px; width: 7px; height: 7px; background: repeating-linear-gradient(90deg, #eef, #eef 1px, #8fa6dc 1px, #8fa6dc 2px); }
.sfill { flex: 1; }
.layoutbar { height: 18px; display: flex; background: #ece9d8; border-top: 1px solid #f5f3ea; }
.lnav { display: flex; width: 60px; padding: 1px 0 0 3px; flex: none; }
.ln { width: 14px; height: 15px; position: relative; background: #e0dfd0; border: 1px solid #f4f3ec; }
.ln::after { content: ""; position: absolute; left: 3px; top: 3px; border-top: 4px solid transparent; border-bottom: 4px solid transparent; }
.first::after, .prev::after { border-right: 6px solid #8f8f88; }
.next::after, .last::after { border-left: 6px solid #8f8f88; }
.ltabs { display: flex; flex: none; width: 752px; }
.ltab { position: relative; padding: 0 7.500px; margin-left: 2px; height: 16px; line-height: 16px; white-space: nowrap; color: #222; z-index: 0; }
.ltab::before { content: ""; position: absolute; inset: 0 -2px 0 -2px; transform: skewX(-25deg); background: #ece9d8; border-right: 1px solid #444; border-left: 1px solid #444; border-bottom: 1px solid #444; z-index: -1; }
.ltab.cur { padding: 0 9px 0 10px; margin-left: 3px; }
.ltab.cur::before { background: #fff; transform: none; border-left: 0; border-right: 0; border-bottom: 0; }
.hscroll { width: 412px; display: flex; background: #f5f4ee; padding: 1px 1px 1px 2px; gap: 2px; flex: none; }
.corner2 { width: 18px; flex: none; background: #ece9d8; }
.sepbar { height: 5px; background: #aeb2b8; flex: none; }
.command { height: 58px; display: flex; background: #fff; }
.grip { width: 15px; background: #aaa linear-gradient(#888, #888) 2px 2px / 11px 2px no-repeat; flex: none; }
.cmdmain { flex: 1; display: flex; flex-direction: column; font: 13.350px/16px "Liberation Mono", monospace; color: #111; }
.cmdtop { height: 39px; display: flex; border-bottom: 1px solid #aca899; }
.history { flex: 1; padding: 1px 0 0 1px; white-space: pre; }
.cmdv { width: 15px; display: flex; flex-direction: column; gap: 7px; padding-top: 1px; flex: none; }
.cmdv .sb { width: 14px; }
.cmdline { height: 19px; display: flex; align-items: center; }
.prompt { flex: 1; padding: 2px 0 0 1px; }
.cmdh { width: 67px; display: flex; height: 17px; gap: 1px; background: #f5f4ee; padding: 1px 0 1px 4px; flex: none; }
.corner3 { width: 17px; height: 19px; background: #ece9d8; flex: none; }
.status { height: 22px; margin: 0 -1px 0 0; border-top: 1px solid #000; background: linear-gradient(#fafafa, #dcdcdc 60%, #c6c6c6); display: flex; align-items: center; justify-content: space-between; padding: 0 3px 0 9px; color: #222; font-size: 11px; flex: none; }
.resize { width: 10px; height: 10px; background: repeating-linear-gradient(135deg, #999, #999 2px, transparent 2px, transparent 4px); }

.taskbar { height: 30px; display: flex; align-items: center; background: linear-gradient(#1a4cb0 0, #3a80ea 8%, #2a62d8 20%, #2458cf 85%, #1a3f98 100%); color: #fff; flex: none; }
.start { width: 96px; height: 30px; background: linear-gradient(#2f8a2f 0, #57b457 15%, #3a963a 40%, #348c34 85%, #276e27 100%); border-radius: 0 10px 10px 0; display: flex; align-items: center; padding-left: 9px; flex: none; font: italic 700 17px "Liberation Sans", sans-serif; box-shadow: inset -4px 0 4px rgba(0,0,0,.25); }
.start span { margin-left: 4px; text-shadow: 1px 1px 1px #222; }
.xp { width: 22px; height: 22px; flex: none; }
.ql { width: 102px; display: flex; align-items: center; padding-left: 12px; gap: 5px; flex: none; }
.qli { width: 18px; height: 18px; flex: none; }
.chev { font-size: 12px; color: #dde; margin: -10px 0 0 7px; }
.tbtn { width: 158px; height: 24px; margin-right: 1.500px; display: flex; align-items: center; padding-left: 7px; background: linear-gradient(#4b8cf0, #3c80ea); border-radius: 3px; flex: none; white-space: nowrap; font-size: 11px; letter-spacing: .05px; box-shadow: inset 0 1px 0 rgba(255,255,255,.25); }
.tbtn.act { background: #1c4bac; box-shadow: inset 1px 1px 2px #0c2c70; }
.tbi { width: 16px; height: 16px; margin-right: 6px; flex: none; }
.tspace { flex: 1; }
.lang { width: 16px; height: 16px; line-height: 16px; background: #2d6ad2; color: #eef; font-size: 11px; text-align: center; flex: none; margin-right: 5px; }
.tri16 { width: 16px; height: 16px; flex: none; margin-right: 6px; }
.restore { width: 14px; margin: 0 17px 0 0; flex: none; display: flex; flex-direction: column; align-items: center; gap: 6px; }
.r-ic { width: 8px; height: 6px; border: 1px solid #fff; }
.r-tri { width: 6px; height: 3px; background: #fff; clip-path: polygon(0 0, 100% 0, 50% 100%); }
.tray { width: 110px; height: 30px; display: flex; align-items: center; padding-left: 9px; background: linear-gradient(#1790e8 0, #2aa2f0 10%, #1a8ce6 25%, #1684e0 85%, #0f64c4 100%); border-left: 1px solid #0f3f9c; position: relative; flex: none; gap: 2px; }
.tray .tri16 { margin-right: 0; width: 17px; height: 17px; }
.trayarrow { position: absolute; left: -10px; top: 6px; width: 18px; height: 18px; border-radius: 50%; border: 1px solid #cfe4ff; background: radial-gradient(circle at 40% 30%, #5fb0ff, #1a5cc8); font: 700 16px/14px "Liberation Sans", sans-serif; text-align: center; color: #fff; }
.clock { margin-left: 5px; font-size: 11px; color: #fff; letter-spacing: .3px; }

.menu { position: absolute; left: 371px; top: 54px; width: 149px; height: 559px; background: #fff; border: 1px solid #aca899; box-shadow: 2px 2px 3px rgba(0,0,0,.5); padding: 1px 2px; display: flex; flex-direction: column; color: #111; }
.it { height: 20px; display: flex; align-items: center; position: relative; padding: 2px 0 0 23px; flex: none; font-size: 11px; letter-spacing: .28px; white-space: nowrap; }
.mic { position: absolute; left: 2px; top: 1px; width: 18px; height: 18px; }
.it.hl { background: #316ac5; color: #fff; }
.sp { height: 1px; margin: 3px 3px 5px 3px; background: #aca899; flex: none; }
.ar { position: absolute; right: 6px; top: 5px; border-top: 4px solid transparent; border-bottom: 4px solid transparent; border-left: 4px solid #111; }
```
